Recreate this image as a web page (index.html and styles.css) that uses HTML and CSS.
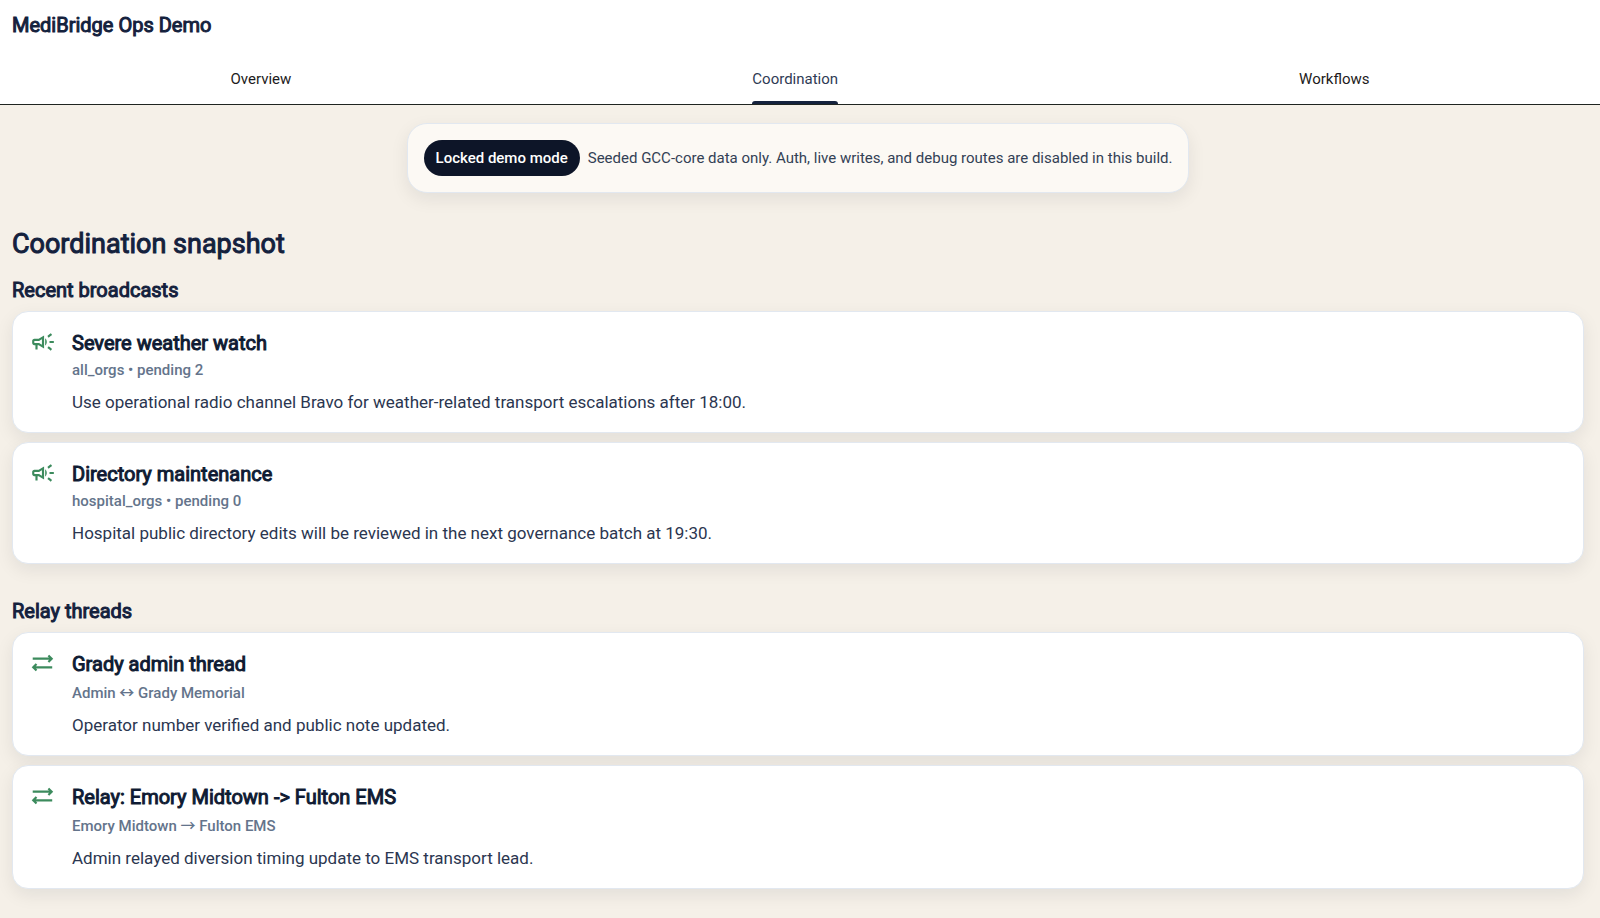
FILE: index.html
```html
<!DOCTYPE html>
<html lang="en">

<head>
    <meta charset="UTF-8">
    <meta name="viewport" content="width=device-width, initial-scale=1.0">
    <title>MediBridge Ops Demo</title>
    <link rel="stylesheet" href="styles.css">
</head>

<body>
    <svg class="sprite" aria-hidden="true">
        <symbol id="icon-campaign" viewBox="0 0 24 24">
            <path d="M18 11v2h4v-2h-4zm-2 6.610c.96.71 2.210 1.650 3.200 2.390.4-.53.8-1.070 1.200-1.600-.99-.74-2.240-1.680-3.200-2.400-.4.540-.8 1.080-1.200 1.610zM20.400 5.600c-.4-.53-.8-1.070-1.200-1.600-.99.740-2.240 1.680-3.200 2.400.4.530.8 1.070 1.200 1.600.96-.72 2.210-1.650 3.200-2.400zM4 9c-1.100 0-2 .9-2 2v2c0 1.100.9 2 2 2h1v4h2v-4h1l5 3V6L8 9H4zm5.030 1.710L11 9.530v4.940l-1.970-1.180-.48-.29H4v-2h4.550l.48-.29zM15.500 12c0-1.330-.58-2.530-1.500-3.350v6.690c.92-.81 1.500-2.010 1.500-3.340z" />
        </symbol>
        <symbol id="icon-relay" viewBox="0 0 24 24">
            <path d="M2.500 8h18M17 5l3 3-3 3M20.500 16h-18M6 13l-3 3 3 3" fill="none" stroke="currentColor" stroke-width="2" />
        </symbol>
    </svg>

    <header class="header">
        <h1 class="brand">MediBridge Ops Demo</h1>
        <nav class="tabs">
            <a class="tab" href="#overview">Overview</a>
            <a class="tab active" href="#coordination">Coordination</a>
            <a class="tab" href="#workflows">Workflows</a>
        </nav>
    </header>

    <main class="content">
        <div class="banner">
            <span class="badge">Locked demo mode</span>
            <span class="banner-text">Seeded GCC-core data only. Auth, live writes, and debug routes are disabled in this build.</span>
        </div>

        <h2 class="page-title">Coordination snapshot</h2>

        <!-- Broadcasts -->
        <section class="section">
            <h3 class="section-title">Recent broadcasts</h3>
            <article class="card">
                <svg class="icon"><use href="#icon-campaign" /></svg>
                <div>
                    <h4 class="card-title">Severe weather watch</h4>
                    <p class="meta">all_orgs • pending 2</p>
                    <p class="message">Use operational radio channel Bravo for weather-related transport escalations after 18:00.</p>
                </div>
            </article>
            <article class="card">
                <svg class="icon"><use href="#icon-campaign" /></svg>
                <div>
                    <h4 class="card-title">Directory maintenance</h4>
                    <p class="meta">hospital_orgs • pending 0</p>
                    <p class="message">Hospital public directory edits will be reviewed in the next governance batch at 19:30.</p>
                </div>
            </article>
        </section>

        <!-- Relay threads -->
        <section class="section relay">
            <h3 class="section-title">Relay threads</h3>
            <article class="card">
                <svg class="icon"><use href="#icon-relay" /></svg>
                <div>
                    <h4 class="card-title">Grady admin thread</h4>
                    <p class="meta">Admin ↔ Grady Memorial</p>
                    <p class="message">Operator number verified and public note updated.</p>
                </div>
            </article>
            <article class="card">
                <svg class="icon"><use href="#icon-relay" /></svg>
                <div>
                    <h4 class="card-title">Relay: Emory Midtown -&gt; Fulton EMS</h4>
                    <p class="meta">Emory Midtown → Fulton EMS</p>
                    <p class="message">Admin relayed diversion timing update to EMS transport lead.</p>
                </div>
            </article>
        </section>
    </main>
</body>

</html>
```
FILE: styles.css
```css
* {
    box-sizing: border-box;
}

body {
    margin: 0;
    font-family: Roboto, "Noto Sans CJK JP", sans-serif;
    color: #14213d;
    background-color: #f5f0e8;
}

h1,
h2,
h3,
h4,
p {
    margin: 0;
}

h1,
h2,
h3,
h4 {
    font-weight: 400;
    -webkit-text-stroke: 1px currentColor;
}

.sprite {
    display: none;
}

.header {
    background-color: #fff;
    border-bottom: 1px solid #1f2420;
}

.brand {
    padding: 11px 12px 15px;
    font-size: 20px;
    line-height: 28px;
}

.tabs {
    display: flex;
    justify-content: space-around;
}

.tab {
    height: 50px;
    color: #1d1b20;
    font-size: 15px;
    line-height: 50px;
    text-decoration: none;
}

.tab.active {
    position: relative;
    color: #2f3b55;
}

.tab.active::after {
    content: "";
    position: absolute;
    left: 0;
    right: 0;
    bottom: 0;
    height: 3px;
    border-radius: 3px 3px 0 0;
    background-color: #14213d;
}

.content {
    padding: 18px 16px 28px 12px;
}

.banner {
    display: flex;
    align-items: center;
    gap: 8px;
    width: fit-content;
    margin: 0 auto 33px;
    padding: 16px;
    background-color: #fcf9f4;
    border: 1px solid #e2e8f0;
    border-radius: 20px;
    box-shadow: 0 6px 18px rgba(15, 23, 42, 0.08);
}

.badge {
    padding: 8px 12px;
    border-radius: 18px;
    background-color: #0d1528;
    color: #fff;
    font-size: 15px;
    line-height: 20px;
    font-weight: 500;
}

.banner-text {
    color: #334155;
    font-size: 15px;
    line-height: 20px;
}

.page-title {
    margin-bottom: 14px;
    font-size: 27px;
    line-height: 36px;
}

.section-title {
    margin-bottom: 7px;
    font-size: 20px;
    line-height: 28px;
}

.card {
    display: flex;
    gap: 16px;
    margin-bottom: 9px;
    padding: 17px 17px 18px;
    background-color: #fff;
    border: 1px solid #e2e8f0;
    border-radius: 16px;
    box-shadow: 0 6px 18px rgba(15, 23, 42, 0.08);
}

.section {
    margin-bottom: 33px;
}

.section:last-child {
    margin-bottom: 0;
}

.icon {
    flex: none;
    width: 26px;
    height: 26px;
    color: #3c8b5d;
    fill: currentColor;
}

.card-title {
    color: #0f1b33;
    font-size: 20px;
    line-height: 28px;
}

.meta {
    margin-bottom: 7px;
    color: #64748b;
    font-size: 15px;
    line-height: 26px;
    font-weight: 500;
}

.relay .meta {
    margin-bottom: 5px;
    line-height: 30px;
}

.message {
    color: #2b3650;
    font-size: 17px;
    line-height: 24px;
}
```
